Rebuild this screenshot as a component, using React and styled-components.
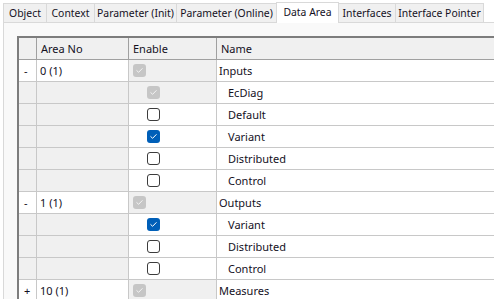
import React from "react"
import styled, { createGlobalStyle, css } from "styled-components"

const Global = createGlobalStyle`
    html, body {
        margin: 0;
        padding: 0;
        background: #ffffff;
        overflow: hidden;
    }
    body {
        font-family: "Segoe UI", "Noto Sans", "Open Sans", sans-serif;
        font-size: 11px;
        color: #14101e;
    }
`

const Page = styled.div`
    width: 494px;
    height: 299px;
    overflow: hidden;
`

const TabStrip = styled.div`
    display: flex;
    align-items: flex-end;
    height: 22px;
    padding-left: 3px;
`

const Tab = styled.div`
    box-sizing: border-box;
    width: ${props => props.w}px;
    height: 19px;
    display: flex;
    align-items: center;
    justify-content: center;
    font-size: 10.4px;
    background: #f0f0f0;
    border: 1px solid #d9d9d9;
    border-bottom: none;
    margin-right: -1px;
    white-space: nowrap;
    ${props => props.active && css`
        height: 21px;
        background: #ffffff;
        position: relative;
        z-index: 2;
        margin-bottom: -1px;
        padding-bottom: 2px;
    `}
`

const Panel = styled.div`
    margin-left: 3px;
    border-top: 1px solid #d9d9d9;
    border-left: 1px solid #d9d9d9;
    background: #f9f9f9;
    height: 300px;
    padding: 13px 0 0 13px;
`

const Grid = styled.div`
    width: 520px;
    border-top: 2px solid #7d7d7d;
    border-left: 2px solid #7d7d7d;
    background: #ffffff;
`

const HeadRow = styled.div`
    display: grid;
    grid-template-columns: 18px 92px 88px 1fr;
    height: 21px;
    border-bottom: 1px solid #a0a0a0;
    background: #f0f0f0;
`

const HeadCell = styled.div`
    display: flex;
    align-items: center;
    padding-left: 4px;
    border-right: 1px solid #a0a0a0;
`

const Row = styled.div`
    display: grid;
    grid-template-columns: 18px 92px 88px 1fr;
    height: 21px;
    border-bottom: 1px solid #c8c8c8;
`

const Cell = styled.div`
    display: flex;
    align-items: center;
    border-right: 1px solid #c8c8c8;
    background: ${props => props.grey ? "#f0f0f0" : "#ffffff"};
    padding-left: ${props => props.indent || 0}px;
    white-space: nowrap;
`

const Box = styled.span`
    width: 13px;
    height: 13px;
    box-sizing: border-box;
    border-radius: 3px;
    display: flex;
    align-items: center;
    justify-content: center;
    ${props => props.state === "off" && css`
        border: 1px solid #3c3c3c;
        background: #ffffff;
    `}
    ${props => props.state === "on" && css`
        background: #005fb8;
    `}
    ${props => props.state === "disabled" && css`
        background: #c6c6c6;
    `}
`

const Check = ({ state }) => (
    <Box state={state}>
        {state !== "off" && (
            <svg width="9" height="9" viewBox="0 0 9 9">
                <path
                    d="M1.8 4.6 L3.6 6.3 L7.2 2.6"
                    fill="none"
                    stroke={state === "on" ? "#ffffff" : "#f4f4f4"}
                    strokeWidth="1"
                    strokeLinecap="round"
                    strokeLinejoin="round"
                />
            </svg>
        )}
    </Box>
)

const tabs = [
    { label: "Object", w: 44 },
    { label: "Context", w: 49 },
    { label: "Parameter (Init)", w: 83 },
    { label: "Parameter (Online)", w: 101 },
    { label: "Data Area", w: 63, active: true },
    { label: "Interfaces", w: 58 },
    { label: "Interface Pointer", w: 89 },
]

const rows = [
    { group: true, sign: "-", area: "0 (1)", state: "disabled", name: "Inputs" },
    { state: "disabled", locked: true, name: "EcDiag" },
    { state: "off", name: "Default" },
    { state: "on", name: "Variant" },
    { state: "off", name: "Distributed" },
    { state: "off", name: "Control" },
    { group: true, sign: "-", area: "1 (1)", state: "disabled", name: "Outputs" },
    { state: "on", name: "Variant" },
    { state: "off", name: "Distributed" },
    { state: "off", name: "Control" },
    { group: true, sign: "+", area: "10 (1)", state: "disabled", name: "Measures" },
]

const App = () => {
    return (
        <Page>
            <Global />
            <TabStrip>
                {tabs.map(t => (
                    <Tab key={t.label} w={t.w} active={t.active}>{t.label}</Tab>
                ))}
            </TabStrip>
            <Panel>
                <Grid>
                    <HeadRow>
                        <HeadCell />
                        <HeadCell>Area No</HeadCell>
                        <HeadCell>Enable</HeadCell>
                        <HeadCell>Name</HeadCell>
                    </HeadRow>
                    {rows.map((r, i) => (
                        <Row key={i}>
                            <Cell grey={!r.group} indent={5}>{r.group ? r.sign : ""}</Cell>
                            <Cell grey={!r.group} indent={3}>{r.group ? r.area : ""}</Cell>
                            <Cell grey={r.group || r.locked} indent={r.group ? 4 : 18}>
                                <Check state={r.state} />
                            </Cell>
                            <Cell indent={r.group ? 2 : 11}>{r.name}</Cell>
                        </Row>
                    ))}
                </Grid>
            </Panel>
        </Page>
    )
}

export default App
